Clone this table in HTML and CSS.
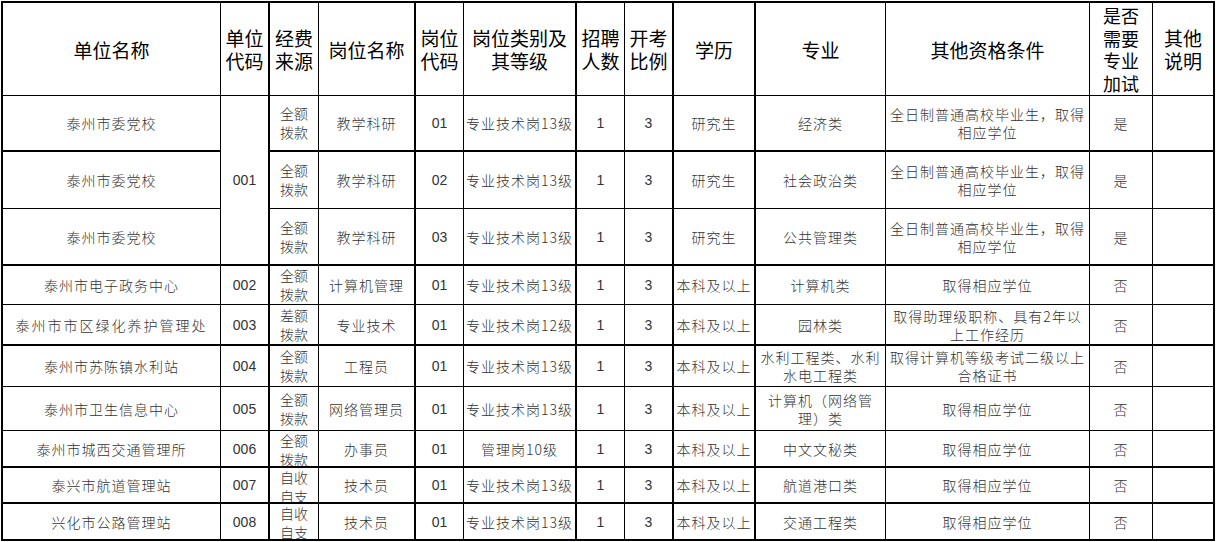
FILE: index.html
```html
<!DOCTYPE html>
<html lang="zh-CN">
<head>
<meta charset="utf-8">
<title>岗位表</title>
<link rel="stylesheet" href="styles.css">
</head>
<body>
<div class="sheet">
  <div class="row head">
    <div class="cell c1">单位名称</div>
    <div class="cell c2">单位<br>代码</div>
    <div class="cell c3">经费<br>来源</div>
    <div class="cell c4">岗位名称</div>
    <div class="cell c5">岗位<br>代码</div>
    <div class="cell c6">岗位类别及<br>其等级</div>
    <div class="cell c7">招聘<br>人数</div>
    <div class="cell c8">开考<br>比例</div>
    <div class="cell c9">学历</div>
    <div class="cell c10">专业</div>
    <div class="cell c11">其他资格条件</div>
    <div class="cell c12 tall">是否<br>需要<br>专业<br>加试</div>
    <div class="cell c13">其他<br>说明</div>
  </div>

  <div class="row tb">
    <div class="cell c1">泰州市委党校</div>
    <div class="cell c2 num span3">001</div>
    <div class="cell c3 fund">全额<br>拨款</div>
    <div class="cell c4">教学科研</div>
    <div class="cell c5 num">01</div>
    <div class="cell c6">专业技术岗13级</div>
    <div class="cell c7 num">1</div>
    <div class="cell c8 num">3</div>
    <div class="cell c9">研究生</div>
    <div class="cell c10">经济类</div>
    <div class="cell c11">全日制普通高校毕业生，取得<br>相应学位</div>
    <div class="cell c12">是</div>
    <div class="cell c13"></div>
  </div>

  <div class="row">
    <div class="cell c1">泰州市委党校</div>
    <div class="cell c3 fund">全额<br>拨款</div>
    <div class="cell c4">教学科研</div>
    <div class="cell c5 num">02</div>
    <div class="cell c6">专业技术岗13级</div>
    <div class="cell c7 num">1</div>
    <div class="cell c8 num">3</div>
    <div class="cell c9">研究生</div>
    <div class="cell c10">社会政治类</div>
    <div class="cell c11">全日制普通高校毕业生，取得<br>相应学位</div>
    <div class="cell c12">是</div>
    <div class="cell c13"></div>
  </div>

  <div class="row tb">
    <div class="cell c1">泰州市委党校</div>
    <div class="cell c3 fund">全额<br>拨款</div>
    <div class="cell c4">教学科研</div>
    <div class="cell c5 num">03</div>
    <div class="cell c6">专业技术岗13级</div>
    <div class="cell c7 num">1</div>
    <div class="cell c8 num">3</div>
    <div class="cell c9">研究生</div>
    <div class="cell c10">公共管理类</div>
    <div class="cell c11">全日制普通高校毕业生，取得<br>相应学位</div>
    <div class="cell c12">是</div>
    <div class="cell c13"></div>
  </div>

  <div class="row">
    <div class="cell c1">泰州市电子政务中心</div>
    <div class="cell c2 num">002</div>
    <div class="cell c3 fund">全额<br>拨款</div>
    <div class="cell c4">计算机管理</div>
    <div class="cell c5 num">01</div>
    <div class="cell c6">专业技术岗13级</div>
    <div class="cell c7 num">1</div>
    <div class="cell c8 num">3</div>
    <div class="cell c9">本科及以上</div>
    <div class="cell c10">计算机类</div>
    <div class="cell c11">取得相应学位</div>
    <div class="cell c12">否</div>
    <div class="cell c13"></div>
  </div>

  <div class="row tb">
    <div class="cell c1 wide">泰州市市区绿化养护管理处</div>
    <div class="cell c2 num">003</div>
    <div class="cell c3 fund">差额<br>拨款</div>
    <div class="cell c4">专业技术</div>
    <div class="cell c5 num">01</div>
    <div class="cell c6">专业技术岗12级</div>
    <div class="cell c7 num">1</div>
    <div class="cell c8 num">3</div>
    <div class="cell c9">本科及以上</div>
    <div class="cell c10">园林类</div>
    <div class="cell c11">取得助理级职称、具有2年以<br>上工作经历</div>
    <div class="cell c12">否</div>
    <div class="cell c13"></div>
  </div>

  <div class="row">
    <div class="cell c1">泰州市苏陈镇水利站</div>
    <div class="cell c2 num">004</div>
    <div class="cell c3 fund">全额<br>拨款</div>
    <div class="cell c4">工程员</div>
    <div class="cell c5 num">01</div>
    <div class="cell c6">专业技术岗13级</div>
    <div class="cell c7 num">1</div>
    <div class="cell c8 num">3</div>
    <div class="cell c9">本科及以上</div>
    <div class="cell c10">水利工程类、水利<br>水电工程类</div>
    <div class="cell c11">取得计算机等级考试二级以上<br>合格证书</div>
    <div class="cell c12">否</div>
    <div class="cell c13"></div>
  </div>

  <div class="row">
    <div class="cell c1">泰州市卫生信息中心</div>
    <div class="cell c2 num">005</div>
    <div class="cell c3 fund">全额<br>拨款</div>
    <div class="cell c4">网络管理员</div>
    <div class="cell c5 num">01</div>
    <div class="cell c6">专业技术岗13级</div>
    <div class="cell c7 num">1</div>
    <div class="cell c8 num">3</div>
    <div class="cell c9">本科及以上</div>
    <div class="cell c10">计算机（网络管<br>理）类</div>
    <div class="cell c11">取得相应学位</div>
    <div class="cell c12">否</div>
    <div class="cell c13"></div>
  </div>

  <div class="row tb">
    <div class="cell c1">泰州市城西交通管理所</div>
    <div class="cell c2 num">006</div>
    <div class="cell c3 fund">全额<br>拨款</div>
    <div class="cell c4">办事员</div>
    <div class="cell c5 num">01</div>
    <div class="cell c6">管理岗10级</div>
    <div class="cell c7 num">1</div>
    <div class="cell c8 num">3</div>
    <div class="cell c9">本科及以上</div>
    <div class="cell c10">中文文秘类</div>
    <div class="cell c11">取得相应学位</div>
    <div class="cell c12">否</div>
    <div class="cell c13"></div>
  </div>

  <div class="row tb">
    <div class="cell c1">泰兴市航道管理站</div>
    <div class="cell c2 num">007</div>
    <div class="cell c3 fund">自收<br>自支</div>
    <div class="cell c4">技术员</div>
    <div class="cell c5 num">01</div>
    <div class="cell c6">专业技术岗13级</div>
    <div class="cell c7 num">1</div>
    <div class="cell c8 num">3</div>
    <div class="cell c9">本科及以上</div>
    <div class="cell c10">航道港口类</div>
    <div class="cell c11">取得相应学位</div>
    <div class="cell c12">否</div>
    <div class="cell c13"></div>
  </div>

  <div class="row tb">
    <div class="cell c1">兴化市公路管理站</div>
    <div class="cell c2 num">008</div>
    <div class="cell c3 fund">自收<br>自支</div>
    <div class="cell c4">技术员</div>
    <div class="cell c5 num">01</div>
    <div class="cell c6">专业技术岗13级</div>
    <div class="cell c7 num">1</div>
    <div class="cell c8 num">3</div>
    <div class="cell c9">本科及以上</div>
    <div class="cell c10">交通工程类</div>
    <div class="cell c11">取得相应学位</div>
    <div class="cell c12">否</div>
    <div class="cell c13"></div>
  </div>
</div>
</body>
</html>
```

FILE: styles.css
```css
html, body {
  margin: 0;
  padding: 0;
  background: #ffffff;
}

.sheet {
  display: grid;
  grid-template-columns: 218px 49px 49px 97px 48px 113px 48px 49px 82px 130px 204px 63px 62px;
  grid-template-rows: 93px 56px 57px 57px 39px 41px 41px 44px 37px 36px 37px;
  width: max-content;
  margin: 1px 0 0 1px;
  border-left: 2px solid #000;
  border-top: 2px solid #000;
}

.row {
  display: contents;
}

.cell {
  box-sizing: border-box;
  border-right: 1px solid #000;
  border-bottom: 1px solid #000;
  display: flex;
  align-items: center;
  justify-content: center;
  text-align: center;
  overflow: hidden;
  white-space: nowrap;
  font-family: "Noto Sans CJK SC", sans-serif;
  font-weight: 300;
  font-size: 14px;
  line-height: 18px;
  letter-spacing: 1px;
  color: #333;
}

.c2, .c4, .c6, .c8, .c9, .c13 {
  border-right-width: 2px;
}

.row.tb > .cell,
.span3 {
  border-bottom-width: 2px;
}

.span3 {
  grid-row: span 3;
}

.head .cell {
  font-size: 19px;
  font-weight: 400;
  line-height: 23px;
  letter-spacing: 0;
  color: #000;
}

.head .tall {
  font-size: 18px;
  line-height: 22.5px;
}

.num {
  font-family: "Liberation Sans", Arial, sans-serif;
  font-weight: 400;
  letter-spacing: 0;
}

.fund {
  align-items: safe center;
  line-height: 19px;
  letter-spacing: 0;
}

.wide {
  letter-spacing: 2px;
}
```
